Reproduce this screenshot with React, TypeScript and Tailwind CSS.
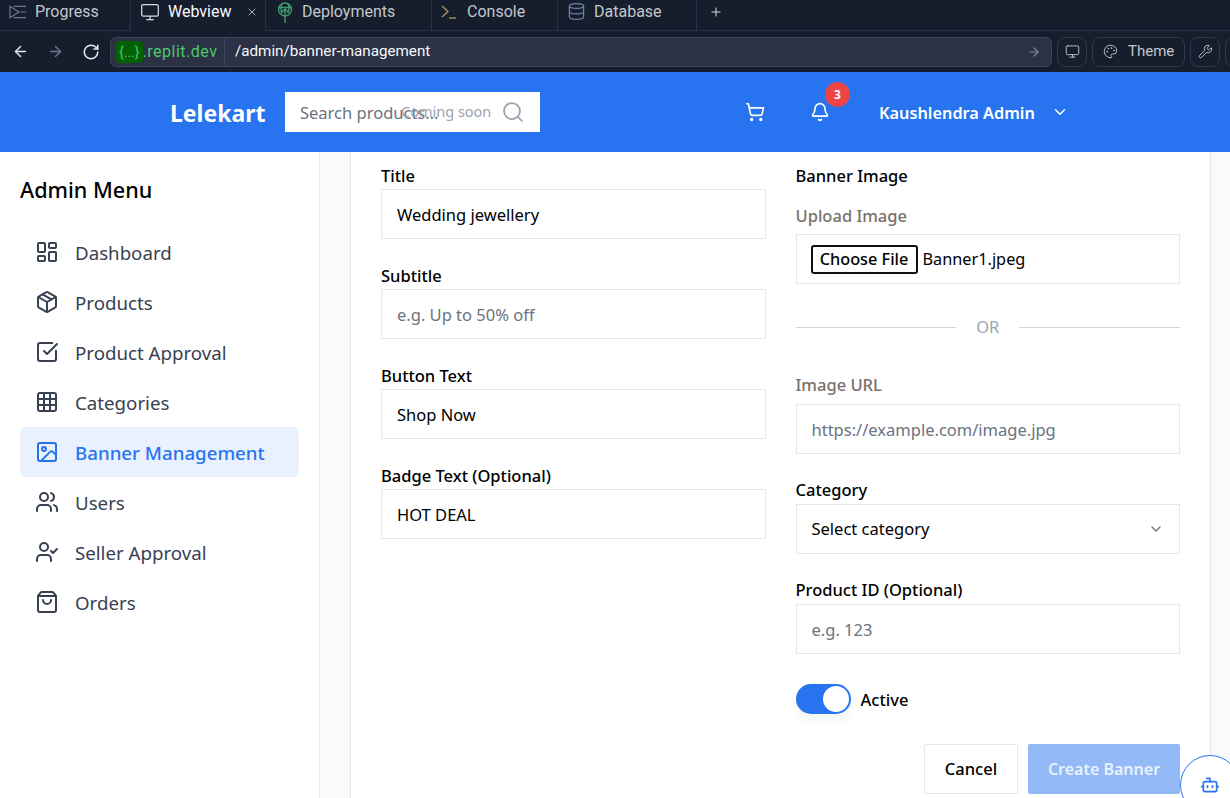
import {
  ArrowLeft, ArrowRight, Bell, Bot, ChevronDown, Database, Grid3x3, Image, LayoutDashboard,
  Monitor, Package, Palette, Plus, RotateCw, Search, ShoppingBag, ShoppingCart, SquareCheckBig,
  UserCheck, Users, Wrench, X,
} from 'lucide-react';
import type { ReactNode } from 'react';

const menu = [
  { label: 'Dashboard', icon: LayoutDashboard },
  { label: 'Products', icon: Package },
  { label: 'Product Approval', icon: SquareCheckBig },
  { label: 'Categories', icon: Grid3x3 },
  { label: 'Banner Management', icon: Image, active: true },
  { label: 'Users', icon: Users },
  { label: 'Seller Approval', icon: UserCheck },
  { label: 'Orders', icon: ShoppingBag },
];

function ProgressIcon() {
  return (
    <svg width="18" height="14" viewBox="0 0 19 14" fill="none" stroke="#6f7795" strokeWidth="1.3">
      <path d="M1 1 L10.5 7 L1 13 Z" />
      <path d="M5 1 H18 M12 7 H18 M5 13 H18" />
    </svg>
  );
}

function DeployIcon() {
  return (
    <svg width="16" height="21" viewBox="0 0 16 21" fill="none" stroke="#3f9a6b" strokeWidth="1.4">
      <circle cx="8" cy="7.5" r="6.5" />
      <path d="M1.5 5.5 H14.5 M5 1.5 C3.8 5 4 9 5 11 M11 1.5 C12.2 5 12 9 11 11" />
      <path d="M8 21 V7 M4 11 L8 7 L12 11" />
    </svg>
  );
}

function ConsoleIcon() {
  return (
    <svg width="16" height="14" viewBox="0 0 16 14" fill="none" stroke="#a8935a" strokeWidth="1.4">
      <path d="M1 1 L7 6.5 L1 12" />
      <path d="M8 13 H15" />
    </svg>
  );
}

function EditorTab({ width, label, icon, active, children }: { width: string; label: string; icon: ReactNode; active?: boolean; children?: ReactNode }) {
  return (
    <div className={`${width} flex h-full shrink-0 items-center gap-2 border-r border-[#2b3245] pb-[7px] pl-[9px] ${active ? 'text-[#f5f9fc]' : 'border-b text-[#c2c8cc]'}`}>
      {icon}
      <span>{label}</span>
      {children}
    </div>
  );
}

function IdeBar() {
  return (
    <div className="shrink-0 bg-[#161d2d] font-['Roboto',sans-serif] text-[16px]">
      <div className="flex h-[31px] items-stretch">
        <EditorTab width="w-[131px]" label="Progress" icon={<ProgressIcon />} />
        <EditorTab width="w-[135px]" label="Webview" active icon={<Monitor size={20} className="text-[#d5d9e0]" strokeWidth={1.5} />}>
          <X size={12} className="ml-[7px] text-[#a9b0bd]" />
        </EditorTab>
        <EditorTab width="w-[166px]" label="Deployments" icon={<span className="pl-[2px] pr-[1px] pt-[2px]"><DeployIcon /></span>} />
        <EditorTab width="w-[126px]" label="Console" icon={<span className="pr-[2px]"><ConsoleIcon /></span>} />
        <EditorTab width="w-[139px]" label="Database" icon={<Database size={19} className="text-[#6a87ad]" strokeWidth={1.5} />} />
        <div className="flex flex-1 items-center border-b border-[#2b3245] pb-[7px] pl-[12px]">
          <Plus size={14} className="text-[#f0f2f5]" strokeWidth={1.5} />
        </div>
      </div>
      <div className="flex h-[41px] items-center">
        <div className="flex w-[110px] shrink-0 items-center gap-[18px] pl-[12px]">
          <ArrowLeft size={17} className="shrink-0 text-[#e8ebef]" />
          <ArrowRight size={17} className="shrink-0 text-[#70788a]" />
          <RotateCw size={18} className="shrink-0 text-[#e8ebef]" />
        </div>
        <div className="flex h-[30px] w-[942px] shrink-0 items-center rounded-[6px] border border-[#3a4358] bg-[#2b3245] text-[15.2px] text-[#f5f9fc]">
          <div className="flex h-full w-[114px] shrink-0 items-center border-r border-[#3a4358] pl-[5px] text-[16px] text-[#4cc86d]">
            <span className="rounded-[4px] bg-[#036003] px-[3px] py-[2px] text-[14px] leading-[18px]">{'{...}'}</span>
            <span className="tracking-[0.5px]">.replit.dev</span>
          </div>
          <span className="flex-1 pl-[10px]">/admin/banner-management</span>
          <ArrowRight size={14} className="mr-[10px] text-[#858d9e]" />
        </div>
        <div className="ml-[5px] flex h-[30px] w-[30px] shrink-0 items-center justify-center rounded-[8px] border border-[#2f3749]">
          <Monitor size={15} className="text-[#c2c8cc]" strokeWidth={1.5} />
        </div>
        <div className="ml-[5px] flex h-[30px] w-[93px] shrink-0 items-center gap-[10px] rounded-[8px] border border-[#2f3749] pl-[10px] text-[15px] text-[#c2c8cc]">
          <Palette size={15} strokeWidth={1.5} />
          <span>Theme</span>
        </div>
        <div className="ml-[5px] flex h-[30px] w-[30px] shrink-0 items-center justify-center rounded-[8px] border border-[#2f3749]">
          <Wrench size={15} className="text-[#c2c8cc]" strokeWidth={1.5} />
        </div>
        <div className="ml-[5px] h-[30px] w-[30px] shrink-0 rounded-[8px] border border-[#2f3749]" />
      </div>
    </div>
  );
}

function TopNav() {
  return (
    <header className="flex h-[80px] shrink-0 items-center bg-[#2874f0] text-white">
      <span className="ml-[170px] mt-[2px] w-[115px] text-[23px] font-bold leading-none">Lelekart</span>
      <div className="relative flex h-[40px] w-[255px] items-center bg-white pl-[15px] text-[16.5px] text-[#6b7280]">
        <span className="mt-[3px]">Search products...</span>
        <span className="absolute left-[116px] text-[14.5px] text-[#9ca3af]">Coming soon</span>
        <Search size={24} className="absolute right-[15px] text-[#9ca3af]" strokeWidth={1.75} />
      </div>
      <ShoppingCart size={20} className="ml-[205px]" />
      <div className="relative ml-[45px]">
        <Bell size={20} />
        <span className="absolute -right-[20px] -top-[20px] flex h-[25px] w-[25px] items-center justify-center rounded-full bg-[#ef4444] text-[12px] font-bold">3</span>
      </div>
      <span className="ml-[49px] mt-[3px] text-[16.3px] font-semibold">Kaushlendra Admin</span>
      <ChevronDown size={18} className="ml-[16px] mb-[1px]" />
    </header>
  );
}

function Sidebar() {
  return (
    <aside className="w-[320px] shrink-0 border-r border-[#e5e7eb] bg-white px-[20px] pt-[20px]">
      <h2 className="mb-[19px] text-[21.6px] font-medium leading-[36px] text-black">Admin Menu</h2>
      <nav>
        {menu.map(({ label, icon: Icon, active }) => (
          <div key={label} className={`flex h-[50px] items-center gap-4 rounded-[6px] px-[15px] text-[18.7px] ${active ? 'bg-[#e9f1fe] font-medium text-[#2874f0]' : 'text-[#374151]'}`}>
            <Icon size={24} />
            <span className="mt-[2px]">{label}</span>
          </div>
        ))}
      </nav>
    </aside>
  );
}

function Field({ label, muted, className, children }: { label: string; muted?: boolean; className?: string; children: ReactNode }) {
  return (
    <div className={className}>
      <div className={`mb-[1px] text-[16.5px] font-medium leading-[24px] ${muted ? 'text-[#78716c]' : 'text-black'}`}>{label}</div>
      {children}
    </div>
  );
}

function Input({ value, placeholder }: { value?: string; placeholder?: string }) {
  return (
    <div className={`flex h-[50px] items-center border border-[#e5e7eb] bg-white px-[15px] pt-[2px] text-[16.5px] ${value ? 'text-black' : 'text-[#6b7280]'}`}>
      {value ?? placeholder}
    </div>
  );
}

function BannerForm() {
  return (
    <div className="ml-[30px] mr-[19px] flex-1 border-x border-[#e5e7eb] bg-white px-[30px] pt-[12px]">
      <div className="grid grid-cols-2 gap-x-[30px]">
        <div className="flex flex-col gap-[25px]">
          <Field label="Title"><Input value="Wedding jewellery" /></Field>
          <Field label="Subtitle"><Input placeholder="e.g. Up to 50% off" /></Field>
          <Field label="Button Text"><Input value="Shop Now" /></Field>
          <Field label="Badge Text (Optional)"><Input value="HOT DEAL" /></Field>
        </div>
        <div>
          <div className="text-[16.5px] font-medium leading-[24px] text-black">Banner Image</div>
          <Field label="Upload Image" muted className="mt-[16px]">
            <div className="mt-[6px] flex h-[50px] items-center border border-[#e5e7eb] pl-[14px] text-[16.3px] text-black">
              <span className="flex h-[29px] w-[107px] items-center justify-center rounded-[3px] border-2 border-[#111] font-medium">Choose File</span>
              <span className="ml-[5px]">Banner1.jpeg</span>
            </div>
          </Field>
          <div className="mt-[31px] flex h-[24px] items-center gap-[20px] text-[16.5px] text-[#9ca3af]">
            <div className="h-px flex-1 bg-[#d1d5db]" />
            <span>OR</span>
            <div className="h-px flex-1 bg-[#d1d5db]" />
          </div>
          <Field label="Image URL" muted className="mt-[34px]">
            <div className="mt-[7px]"><Input placeholder="https://example.com/image.jpg" /></div>
          </Field>
          <Field label="Category" className="mt-[24px]">
            <div className="mt-[2px] flex h-[50px] items-center justify-between border border-[#e5e7eb] px-[15px] text-[16.5px] text-black">
              <span>Select category</span>
              <ChevronDown size={16} className="text-[#6b7280]" />
            </div>
          </Field>
          <Field label="Product ID (Optional)" className="mt-[24px]">
            <div className="mt-[2px]"><Input placeholder="e.g. 123" /></div>
          </Field>
          <div className="mt-[30px] flex items-center gap-[10px]">
            <div className="flex h-[30px] w-[55px] items-center justify-end rounded-full bg-[#2874f0] pr-[2px] shadow-[0_6px_12px_rgba(0,0,0,0.05)]">
              <div className="h-[26px] w-[26px] rounded-full bg-white" />
            </div>
            <span className="mt-[2px] text-[16.5px] font-medium text-black">Active</span>
          </div>
          <div className="mt-[30px] flex justify-end gap-[10px]">
            <div className="flex h-[50px] w-[94px] items-center justify-center rounded-[2px] border border-[#e5e7eb] text-[16.5px] font-medium text-black">Cancel</div>
            <div className="flex h-[50px] w-[152px] items-center justify-center rounded-[2px] bg-[#93b9f7] text-[16px] font-semibold text-[#e9f1fe]">Create Banner</div>
          </div>
        </div>
      </div>
    </div>
  );
}

export default function App() {
  return (
    <div className="relative flex h-screen flex-col overflow-hidden bg-[#f9fafb] font-['Noto_Sans',sans-serif]">
      <IdeBar />
      <TopNav />
      <div className="flex flex-1 overflow-hidden">
        <Sidebar />
        <BannerForm />
      </div>
      <div className="absolute left-[1180px] top-[755px] flex h-[60px] w-[60px] items-center justify-center rounded-full border border-[#2874f0] bg-white">
        <Bot size={20} className="text-[#2874f0]" />
      </div>
    </div>
  );
}
